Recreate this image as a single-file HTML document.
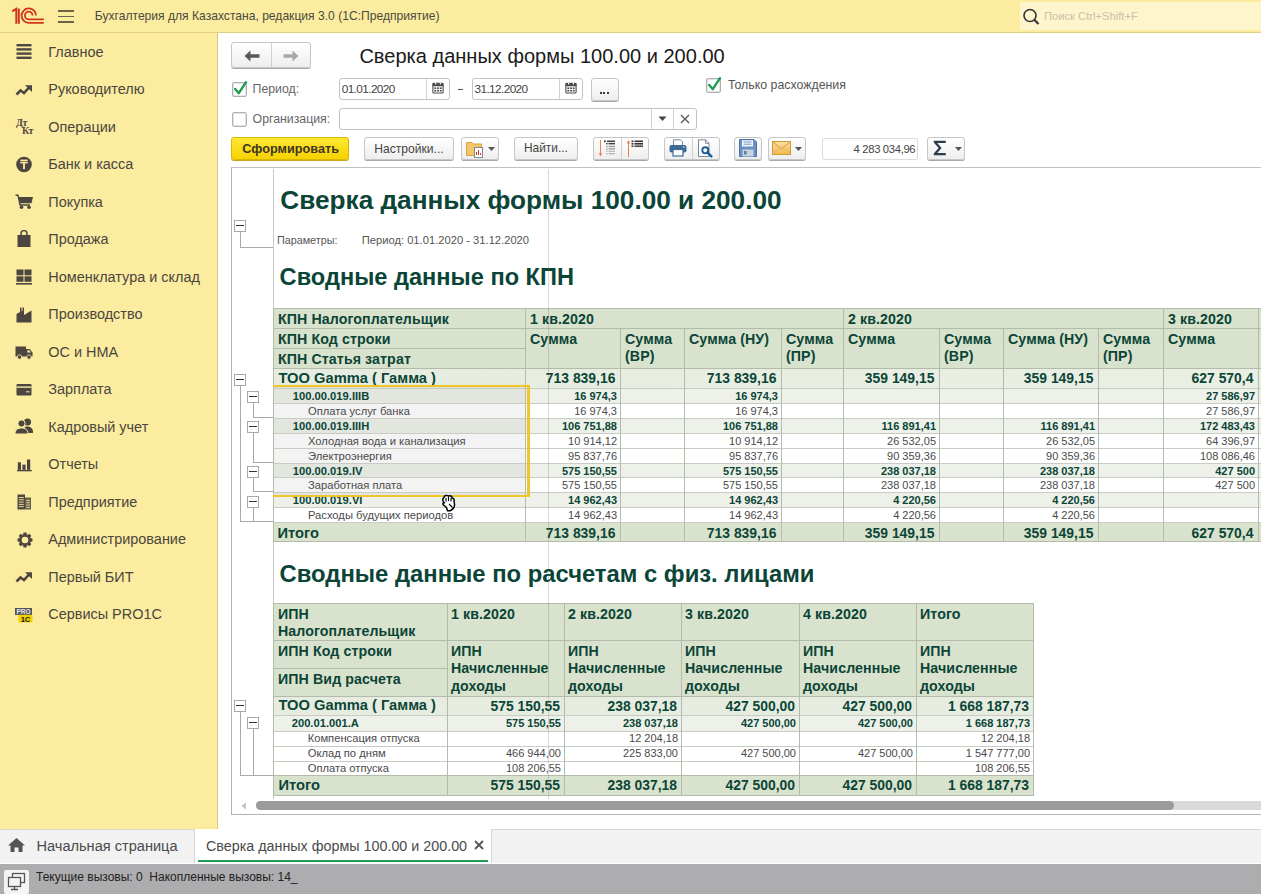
<!DOCTYPE html>
<html><head><meta charset="utf-8"><style>
html,body{margin:0;padding:0;}
body{width:1261px;height:894px;overflow:hidden;position:relative;font-family:"Liberation Sans", sans-serif;background:#fff;}
.b{position:absolute;box-sizing:border-box;}
.t{position:absolute;white-space:pre;}
</style></head><body>
<div class="b" style="left:0px;top:0px;width:1261px;height:894px;background:#fff;"></div><div class="b" style="left:0px;top:0px;width:1261px;height:32px;background:#fbec9f;"></div><div class="b" style="left:0px;top:32px;width:1261px;height:1px;background:#e2cf84;"></div><div class="b" style="left:0px;top:33px;width:217px;height:796px;background:#fbec9f;"></div><div class="b" style="left:217px;top:33px;width:1px;height:796px;background:#d6c880;"></div><svg class="b" style="left:8px;top:2px" width="40" height="26" viewBox="0 0 40 26">
<path d="M4.2 9.4 L8.3 6.9 V21.8" stroke="#cf361c" stroke-width="2" fill="none" stroke-linejoin="miter"/>
<path d="M10.8 6.5 V21.8" stroke="#cf361c" stroke-width="2" fill="none"/>
<path d="M28 13.4 A7.2 7.2 0 1 0 20.6 20.8 H35.8" stroke="#cf361c" stroke-width="1.8" fill="none"/>
<path d="M24.5 13.4 A3.8 3.8 0 1 0 20.6 17.3 H35.8" stroke="#cf361c" stroke-width="1.8" fill="none"/>
</svg><div class="b" style="left:58px;top:10px;width:16px;height:1.5px;background:#6b6548;"></div><div class="b" style="left:58px;top:15.5px;width:16px;height:1.5px;background:#6b6548;"></div><div class="b" style="left:58px;top:21px;width:16px;height:1.5px;background:#6b6548;"></div><div class="t" style="left:94.80px;top:10.36px;font-size:12.1px;line-height:12.1px;color:#4a4a40;">Бухгалтерия для Казахстана, редакция 3.0 (1С:Предприятие)</div><div class="b" style="left:1020px;top:2px;width:241px;height:28px;background:#fdf5cc;"></div><svg class="b" style="left:1022px;top:8px" width="20" height="18" viewBox="0 0 20 18">
<circle cx="8" cy="7.5" r="6" stroke="#333" stroke-width="1.6" fill="none"/>
<path d="M12.3 11.8 L16.5 16" stroke="#333" stroke-width="2.2"/></svg><div class="t" style="left:1044.00px;top:10.82px;font-size:11.2px;line-height:11.2px;color:#c9c2a8;">Поиск Ctrl+Shift+F</div><div class="t" style="left:48.30px;top:44.67px;font-size:14.45px;line-height:14.45px;color:#4a4640;">Главное</div><div class="t" style="left:48.30px;top:82.17px;font-size:14.45px;line-height:14.45px;color:#4a4640;">Руководителю</div><div class="t" style="left:48.30px;top:119.67px;font-size:14.45px;line-height:14.45px;color:#4a4640;">Операции</div><div class="t" style="left:48.30px;top:157.17px;font-size:14.45px;line-height:14.45px;color:#4a4640;">Банк и касса</div><div class="t" style="left:48.30px;top:194.67px;font-size:14.45px;line-height:14.45px;color:#4a4640;">Покупка</div><div class="t" style="left:48.30px;top:232.17px;font-size:14.45px;line-height:14.45px;color:#4a4640;">Продажа</div><div class="t" style="left:48.30px;top:269.67px;font-size:14.45px;line-height:14.45px;color:#4a4640;">Номенклатура и склад</div><div class="t" style="left:48.30px;top:307.17px;font-size:14.45px;line-height:14.45px;color:#4a4640;">Производство</div><div class="t" style="left:48.30px;top:344.67px;font-size:14.45px;line-height:14.45px;color:#4a4640;">ОС и НМА</div><div class="t" style="left:48.30px;top:382.17px;font-size:14.45px;line-height:14.45px;color:#4a4640;">Зарплата</div><div class="t" style="left:48.30px;top:419.67px;font-size:14.45px;line-height:14.45px;color:#4a4640;">Кадровый учет</div><div class="t" style="left:48.30px;top:457.17px;font-size:14.45px;line-height:14.45px;color:#4a4640;">Отчеты</div><div class="t" style="left:48.30px;top:494.67px;font-size:14.45px;line-height:14.45px;color:#4a4640;">Предприятие</div><div class="t" style="left:48.30px;top:532.17px;font-size:14.45px;line-height:14.45px;color:#4a4640;">Администрирование</div><div class="t" style="left:48.30px;top:569.67px;font-size:14.45px;line-height:14.45px;color:#4a4640;">Первый БИТ</div><div class="t" style="left:48.30px;top:607.17px;font-size:14.45px;line-height:14.45px;color:#4a4640;">Сервисы PRO1C</div><svg class="b" style="left:16px;top:44px" width="16" height="16" viewBox="0 0 16 16" fill="#4d4640"><rect x="0.5" y="0" width="15" height="2.4"/><rect x="0.5" y="4.2" width="15" height="2.4"/><rect x="0.5" y="8.4" width="15" height="2.4"/><rect x="0.5" y="12.6" width="15" height="2.4"/></svg><svg class="b" style="left:15px;top:84px" width="18" height="13" viewBox="0 0 18 13" fill="#4d4640"><path d="M1.5 10.5 L5.5 6.5 L9 9 L14 3.5" stroke="#4d4640" stroke-width="2.6" fill="none" stroke-linejoin="miter"/><path d="M10 1.2 H17 V8 Z" /></svg><svg class="b" style="left:16px;top:156px" width="16" height="17" viewBox="0 0 16 17" fill="#4d4640"><circle cx="8" cy="8.5" r="7.8"/><rect x="4.3" y="3.6" width="7.4" height="1.5" fill="#fbec9f"/><rect x="4.3" y="5.8" width="7.4" height="1.6" fill="#fbec9f"/><rect x="7.1" y="5.8" width="1.8" height="7.4" fill="#fbec9f"/></svg><svg class="b" style="left:15px;top:194px" width="18" height="16" viewBox="0 0 18 16" fill="#4d4640"><path d="M0.5 1.2 H3 L5 11 H15" stroke="#4d4640" stroke-width="1.4" fill="none"/><path d="M3.6 3 H18 L16.5 9.2 H4.8 Z"/><circle cx="6.5" cy="13.3" r="1.8"/><circle cx="14" cy="13.3" r="1.8"/></svg><svg class="b" style="left:17px;top:230px" width="14" height="17" viewBox="0 0 14 17" fill="#4d4640"><path d="M0.5 5 H13.5 V17 H0.5 Z"/><path d="M4 6.5 V3.5 A3 3 0 0 1 10 3.5 V6.5" stroke="#4d4640" stroke-width="1.5" fill="none"/></svg><svg class="b" style="left:16px;top:269px" width="16" height="16" viewBox="0 0 16 16" fill="#4d4640"><rect x="0.5" y="0.5" width="7" height="5.8"/><rect x="8.5" y="0.5" width="7" height="5.8"/><rect x="0.5" y="7.3" width="7" height="5.5"/><rect x="8.5" y="7.3" width="7" height="5.5"/><rect x="0" y="14" width="16" height="1.6"/></svg><svg class="b" style="left:16px;top:307px" width="16" height="16" viewBox="0 0 16 16" fill="#4d4640"><path d="M0.5 15.5 V7 L4 5 V0.5 H5.5 V4.3 L6.5 3.8 V0.5 H8 V3 L8 8 L15.5 3.5 V15.5 Z"/><path d="M8 8 L8 4 L0.5 8.5"/></svg><svg class="b" style="left:15px;top:346px" width="18" height="14" viewBox="0 0 18 14" fill="#4d4640"><path d="M0.5 0.5 H11 V10.5 H0.5 Z"/><path d="M11 3 H14.5 L17.5 6.5 V10.5 H11 Z"/><path d="M12.3 4.3 H14 L16 6.6 H12.3 Z" fill="#fbec9f"/><circle cx="4.5" cy="11" r="2.2" stroke="#fbec9f" stroke-width="0.8"/><circle cx="14" cy="11" r="2.2" stroke="#fbec9f" stroke-width="0.8"/></svg><svg class="b" style="left:16px;top:384px" width="16" height="12" viewBox="0 0 16 12" fill="#4d4640"><rect x="0.5" y="0" width="15" height="11.5" rx="1"/><rect x="0.5" y="2.4" width="15" height="1.4" fill="#fbec9f"/><rect x="10" y="7.3" width="3.5" height="1" fill="#fbec9f"/></svg><svg class="b" style="left:15px;top:418px" width="18" height="16" viewBox="0 0 18 16" fill="#4d4640"><circle cx="12.5" cy="4" r="3.6"/><path d="M8 15 C8 10 10 8.5 12.5 8.5 C15 8.5 18 10 18 14 V15 Z"/><circle cx="6.5" cy="5.5" r="3.6" stroke="#fbec9f" stroke-width="1"/><path d="M0 16 C0 11.5 3 10 6.5 10 C10 10 13 11.5 13 16 Z" stroke="#fbec9f" stroke-width="1"/></svg><svg class="b" style="left:17px;top:459px" width="15" height="13" viewBox="0 0 15 13" fill="#4d4640"><rect x="0.8" y="3.3" width="3.2" height="7.6"/><rect x="5.4" y="5.6" width="3.2" height="5.3"/><rect x="10" y="0.5" width="3.2" height="10.4"/><rect x="0" y="11" width="14.8" height="1.3"/></svg><svg class="b" style="left:17px;top:494px" width="15" height="16" viewBox="0 0 15 16" fill="#4d4640"><path d="M0.5 0.5 H8 V15.5 H0.5 Z"/><path d="M8 3.5 H14 V15.5 H8 Z" opacity="0.85"/><g fill="#fbec9f"><rect x="1.8" y="3" width="5" height="0.9"/><rect x="1.8" y="5.3" width="5" height="0.9"/><rect x="1.8" y="7.6" width="5" height="0.9"/><rect x="1.8" y="9.9" width="5" height="0.9"/><rect x="1.8" y="12.2" width="5" height="0.9"/><rect x="9.3" y="6" width="3.5" height="0.9"/><rect x="9.3" y="8.3" width="3.5" height="0.9"/><rect x="9.3" y="10.6" width="3.5" height="0.9"/><rect x="9.3" y="12.9" width="3.5" height="0.9"/></g></svg><svg class="b" style="left:15px;top:571px" width="18" height="13" viewBox="0 0 18 13" fill="#4d4640"><path d="M1.5 10.5 L5.5 6.5 L9 9 L14 3.5" stroke="#4d4640" stroke-width="2.6" fill="none"/><path d="M10 1.2 H17 V8 Z" /></svg><div class="t" style="left:16px;top:117.5px;font:bold 10px/10px 'Liberation Serif',serif;color:#4d4640;letter-spacing:-0.4px">Дт</div><div class="t" style="left:22px;top:125.5px;font:bold 10px/10px 'Liberation Serif',serif;color:#4d4640;letter-spacing:-0.4px">Кт</div><svg class="b" style="left:16.5px;top:532px" width="16" height="16" viewBox="0 0 16 16"><polygon points="15.45,6.49 15.45,9.51 13.24,9.97 13.10,10.31 14.33,12.20 12.20,14.33 10.31,13.10 9.97,13.24 9.51,15.45 6.49,15.45 6.03,13.24 5.69,13.10 3.80,14.33 1.67,12.20 2.90,10.31 2.76,9.97 0.55,9.51 0.55,6.49 2.76,6.03 2.90,5.69 1.67,3.80 3.80,1.67 5.69,2.90 6.03,2.76 6.49,0.55 9.51,0.55 9.97,2.76 10.31,2.90 12.20,1.67 14.33,3.80 13.10,5.69 13.24,6.03" fill="#4d4640"/><circle cx="8" cy="8" r="3.3" fill="#fbec9f"/></svg><svg class="b" style="left:15px;top:608px" width="18" height="15" viewBox="0 0 18 15"><rect x="0" y="0" width="17" height="7" fill="#555"/><rect x="3.5" y="6.8" width="14" height="7.5" fill="#f5d000"/><text x="8.5" y="6" font-family="Liberation Sans" font-weight="bold" font-size="6.5" fill="#e8e8f0" text-anchor="middle">PRO</text><text x="10.5" y="13.5" font-family="Liberation Sans" font-weight="bold" font-size="7.5" fill="#111" text-anchor="middle">1C</text></svg><div class="b" style="left:0px;top:829px;width:1261px;height:34px;background:#f2f2f2;"></div><div class="b" style="left:0px;top:829px;width:1261px;height:1px;background:#d8d8d8;"></div><div class="b" style="left:194px;top:829px;width:298px;height:34px;background:#fff;"></div><div class="b" style="left:194px;top:829px;width:1px;height:34px;background:#d8d8d8;"></div><div class="b" style="left:491px;top:829px;width:1px;height:34px;background:#d8d8d8;"></div><div class="b" style="left:198px;top:860px;width:290px;height:2px;background:#1e9a54;"></div><div class="t" style="left:36.50px;top:838.86px;font-size:14.58px;line-height:14.58px;color:#4a4a4a;">Начальная страница</div><div class="t" style="left:206.00px;top:839.08px;font-size:14.32px;line-height:14.32px;color:#4a4a4a;">Сверка данных формы 100.00 и 200.00</div><svg class="b" style="left:474px;top:840px" width="10" height="10" viewBox="0 0 10 10"><path d="M1 1 L9 9 M9 1 L1 9" stroke="#555" stroke-width="1.8"/></svg><svg class="b" style="left:8px;top:838px" width="17" height="14" viewBox="0 0 17 14"><path d="M8.5 0 L17 7.5 L14.5 7.5 L14.5 14 L10.5 14 L10.5 9.5 L6.5 9.5 L6.5 14 L2.5 14 L2.5 7.5 L0 7.5 Z" fill="#555"/></svg><div class="b" style="left:0px;top:863.6px;width:1261px;height:31px;background:#adacae;"></div><div class="b" style="left:4px;top:870px;width:25px;height:24px;background:#f4f4f4;border-radius:2px;"></div><svg class="b" style="left:6px;top:872px" width="21" height="20" viewBox="0 0 21 20">
<rect x="6.5" y="1.5" width="12" height="9" fill="#f4f4f4" stroke="#555" stroke-width="1.3"/>
<rect x="2.5" y="5.5" width="12" height="9" fill="#f4f4f4" stroke="#555" stroke-width="1.3"/>
<path d="M8.5 14.5 V17 M5 17.5 H12" stroke="#555" stroke-width="1.3"/></svg><div class="t" style="left:36.00px;top:870.84px;font-size:12px;line-height:12px;color:#222;">Текущие вызовы: 0  Накопленные вызовы: 14_</div><div class="b" style="left:231px;top:42px;width:80px;height:26px;background:linear-gradient(#ffffff,#eeeeee);border:1px solid #c6c6c6;border-radius:3px;box-shadow:0 1px 0 #a9a9a9;"></div><div class="b" style="left:271px;top:43px;width:1px;height:24px;background:#d0d0d0;"></div><svg class="b" style="left:243.5px;top:50px" width="18" height="12" viewBox="0 0 18 12"><path d="M0.5 6 L6.5 0.5 L6.5 4.2 L15.5 4.2 L15.5 7.8 L6.5 7.8 L6.5 11.5 Z" fill="#5a5a5a"/></svg><svg class="b" style="left:282px;top:50px" width="18" height="12" viewBox="0 0 18 12"><path d="M16.5 6 L10.5 0.5 L10.5 4.2 L1.5 4.2 L1.5 7.8 L10.5 7.8 L10.5 11.5 Z" fill="#a8a8a8"/></svg><div class="t" style="left:359.40px;top:45.83px;font-size:20.05px;line-height:20.05px;color:#1a1a1a;">Сверка данных формы 100.00 и 200.00</div><div class="b" style="left:232px;top:82px;width:15px;height:15px;background:#fff;border:1px solid #b0b0b0;border-radius:2px;box-shadow:inset 0 0 0 1px #e4e4e4;"></div><svg class="b" style="left:233px;top:80px" width="15" height="16" viewBox="0 0 15 16"><path d="M2.2 9 L5.8 13.2 L13 2.2" stroke="#1d9a50" stroke-width="2.4" fill="none" stroke-linecap="round" stroke-linejoin="round"/></svg><div class="t" style="left:252.60px;top:83.19px;font-size:12.3px;line-height:12.3px;color:#666;">Период:</div><div class="b" style="left:232px;top:112px;width:15px;height:15px;background:#fff;border:1px solid #b0b0b0;border-radius:2px;box-shadow:inset 0 0 0 1px #e4e4e4;"></div><div class="t" style="left:252.60px;top:113.19px;font-size:12.3px;line-height:12.3px;color:#666;">Организация:</div><div class="b" style="left:339px;top:78px;width:111px;height:22px;background:#fff;border:1px solid #c3c3c3;border-radius:3px;"></div><div class="b" style="left:426px;top:79px;width:1px;height:20px;background:#d2d2d2;"></div><svg class="b" style="left:432px;top:82px" width="12" height="12" viewBox="0 0 12 12"><rect x="0.9" y="1.2" width="10.2" height="9.8" rx="1" fill="#fff" stroke="#4a4a4a" stroke-width="1.1"/><rect x="0.6" y="0.9" width="10.8" height="3.4" rx="1" fill="#4a4a4a"/><rect x="3" y="0.6" width="1.2" height="1.8" fill="#fff"/><rect x="7.8" y="0.6" width="1.2" height="1.8" fill="#fff"/><g fill="#4a4a4a"><rect x="2.4" y="5.4" width="1.8" height="1.7"/><rect x="5.1" y="5.4" width="1.8" height="1.7"/><rect x="7.8" y="5.4" width="1.8" height="1.7"/><rect x="2.4" y="8" width="1.8" height="1.5"/><rect x="5.1" y="8" width="1.8" height="1.5"/><rect x="7.8" y="8" width="1.8" height="1.5"/></g></svg><div class="t" style="left:341.70px;top:83.51px;font-size:11.8px;line-height:11.8px;color:#444;letter-spacing:-0.6px;">01.01.2020</div><div class="b" style="left:458.3px;top:88.6px;width:5px;height:1.3px;background:#555;"></div><div class="b" style="left:472px;top:78px;width:111px;height:22px;background:#fff;border:1px solid #c3c3c3;border-radius:3px;"></div><div class="b" style="left:559px;top:79px;width:1px;height:20px;background:#d2d2d2;"></div><svg class="b" style="left:565px;top:82px" width="12" height="12" viewBox="0 0 12 12"><rect x="0.9" y="1.2" width="10.2" height="9.8" rx="1" fill="#fff" stroke="#4a4a4a" stroke-width="1.1"/><rect x="0.6" y="0.9" width="10.8" height="3.4" rx="1" fill="#4a4a4a"/><rect x="3" y="0.6" width="1.2" height="1.8" fill="#fff"/><rect x="7.8" y="0.6" width="1.2" height="1.8" fill="#fff"/><g fill="#4a4a4a"><rect x="2.4" y="5.4" width="1.8" height="1.7"/><rect x="5.1" y="5.4" width="1.8" height="1.7"/><rect x="7.8" y="5.4" width="1.8" height="1.7"/><rect x="2.4" y="8" width="1.8" height="1.5"/><rect x="5.1" y="8" width="1.8" height="1.5"/><rect x="7.8" y="8" width="1.8" height="1.5"/></g></svg><div class="t" style="left:474.50px;top:83.51px;font-size:11.8px;line-height:11.8px;color:#444;letter-spacing:-0.6px;">31.12.2020</div><div class="b" style="left:591px;top:78px;width:28px;height:23px;background:linear-gradient(#ffffff,#eeeeee);border:1px solid #c6c6c6;border-radius:3px;box-shadow:0 1px 0 #a9a9a9;"></div><div class="b" style="left:599.8px;top:92.2px;width:1.9px;height:1.9px;background:#3a3a3a;"></div><div class="b" style="left:603.4px;top:92.2px;width:1.9px;height:1.9px;background:#3a3a3a;"></div><div class="b" style="left:607px;top:92.2px;width:1.9px;height:1.9px;background:#3a3a3a;"></div><div class="b" style="left:706px;top:78px;width:15px;height:15px;background:#fff;border:1px solid #b0b0b0;border-radius:2px;box-shadow:inset 0 0 0 1px #e4e4e4;"></div><svg class="b" style="left:707px;top:76px" width="15" height="16" viewBox="0 0 15 16"><path d="M2.2 9 L5.8 13.2 L13 2.2" stroke="#1d9a50" stroke-width="2.4" fill="none" stroke-linecap="round" stroke-linejoin="round"/></svg><div class="t" style="left:727.90px;top:79.35px;font-size:12.35px;line-height:12.35px;color:#555;">Только расхождения</div><div class="b" style="left:339px;top:108px;width:358px;height:22px;background:#fff;border:1px solid #c3c3c3;border-radius:3px;"></div><div class="b" style="left:651px;top:109px;width:1px;height:20px;background:#d2d2d2;"></div><div class="b" style="left:673px;top:109px;width:1px;height:20px;background:#d2d2d2;"></div><svg class="b" style="left:658px;top:116px" width="9" height="6" viewBox="0 0 9 6"><path d="M0.5 0.5 H8.5 L4.5 5 Z" fill="#444"/></svg><svg class="b" style="left:680px;top:114px" width="10" height="10" viewBox="0 0 10 10"><path d="M1 1 L9 9 M9 1 L1 9" stroke="#555" stroke-width="1.3"/></svg><div class="b" style="left:231px;top:137px;width:118px;height:22.5px;background:linear-gradient(#fee833,#f6d200);border:1px solid #d6b800;border-radius:3px;box-shadow:0 1px 0 #c8a818;"></div><div class="t" style="left:242.30px;top:142.55px;font-size:12.7px;line-height:12.7px;color:#3d3522;font-weight:bold;">Сформировать</div><div class="b" style="left:364px;top:137px;width:90px;height:23px;background:linear-gradient(#ffffff,#eeeeee);border:1px solid #c6c6c6;border-radius:3px;box-shadow:0 1px 0 #a9a9a9;"></div><div class="t" style="left:374.30px;top:143.06px;font-size:12.1px;line-height:12.1px;color:#444;">Настройки...</div><div class="b" style="left:461px;top:137px;width:38px;height:23px;background:linear-gradient(#ffffff,#eeeeee);border:1px solid #c6c6c6;border-radius:3px;box-shadow:0 1px 0 #a9a9a9;"></div><svg class="b" style="left:466px;top:140px" width="20" height="18" viewBox="0 0 20 18"><path d="M0.5 2.5 H6 L7.5 4 H15.5 V15.5 H0.5 Z" fill="#f3c769" stroke="#d9a640" stroke-width="1"/><rect x="8.5" y="7.5" width="8" height="10" fill="#fff" stroke="#888" stroke-width="1"/><path d="M10.5 15 V12 M12.5 15 V10 M14.5 15 V13" stroke="#d04020" stroke-width="1"/></svg><svg class="b" style="left:488px;top:147px" width="7" height="4" viewBox="0 0 7 4"><path d="M0 0 H7 L3.5 4 Z" fill="#555"/></svg><div class="b" style="left:514px;top:137px;width:64px;height:23px;background:linear-gradient(#ffffff,#eeeeee);border:1px solid #c6c6c6;border-radius:3px;box-shadow:0 1px 0 #a9a9a9;"></div><div class="t" style="left:524.00px;top:143.23px;font-size:11.9px;line-height:11.9px;color:#444;">Найти...</div><div class="b" style="left:593px;top:137px;width:56px;height:23px;background:linear-gradient(#ffffff,#eeeeee);border:1px solid #c6c6c6;border-radius:3px;box-shadow:0 1px 0 #a9a9a9;"></div><div class="b" style="left:621px;top:138px;width:1px;height:21px;background:#d0d0d0;"></div><svg class="b" style="left:598px;top:139px" width="19" height="19" viewBox="0 0 19 19"><path d="M2.5 1 V16.5" stroke="#e8804a" stroke-width="1"/><path d="M0.8 14 L2.5 17.5 L4.2 14 Z" fill="#e8804a"/><g fill="#444"><rect x="6" y="1.5" width="2" height="1.6"/><rect x="9" y="1.5" width="8" height="1.6"/><rect x="8" y="4" width="1.6" height="1.4"/><rect x="10.5" y="4" width="6.5" height="1.4"/></g><g fill="#9a9a9a"><rect x="8" y="6.8" width="1.6" height="1.3"/><rect x="10.5" y="6.8" width="6.5" height="1.3"/><rect x="8" y="9.2" width="1.6" height="1.3"/><rect x="10.5" y="9.2" width="6.5" height="1.3"/></g><g fill="#b8b8b8"><rect x="8" y="11.6" width="1.6" height="1.3"/><rect x="10.5" y="11.6" width="6.5" height="1.3"/><rect x="8" y="14" width="1.6" height="1.3"/><rect x="10.5" y="14" width="6.5" height="1.3"/></g></svg><svg class="b" style="left:626px;top:139px" width="19" height="19" viewBox="0 0 19 19"><path d="M2.5 3 V18" stroke="#e8804a" stroke-width="1"/><path d="M0.8 4.5 L2.5 1 L4.2 4.5 Z" fill="#e8804a"/><g fill="#333"><rect x="5.5" y="1.5" width="2" height="1.6"/><rect x="8.5" y="1.5" width="8.5" height="1.6"/><rect x="5.5" y="4" width="2" height="1.6"/><rect x="8.5" y="4" width="8.5" height="1.6"/><rect x="5.5" y="6.5" width="2" height="1.4"/><rect x="8.5" y="6.5" width="8.5" height="1.4"/></g></svg><div class="b" style="left:664px;top:137px;width:56px;height:23px;background:linear-gradient(#ffffff,#eeeeee);border:1px solid #c6c6c6;border-radius:3px;box-shadow:0 1px 0 #a9a9a9;"></div><div class="b" style="left:692px;top:138px;width:1px;height:21px;background:#d0d0d0;"></div><svg class="b" style="left:669px;top:139px" width="18" height="18" viewBox="0 0 18 18"><path d="M4.5 0.8 H11.5 L13.5 2.8 V7 H4.5 Z" fill="#fff" stroke="#7a8a9a" stroke-width="1"/><rect x="0.5" y="6" width="17" height="7.5" rx="2" fill="#3d6b97"/><rect x="14" y="7.5" width="1.6" height="1.2" fill="#cfe0f0"/><rect x="4" y="10.5" width="10" height="6.5" fill="#fff" stroke="#3d6b97" stroke-width="1.2"/></svg><svg class="b" style="left:697px;top:139px" width="18" height="19" viewBox="0 0 18 19"><path d="M1.5 0.8 H8.5 L12 4.3 V17.5 H1.5 Z" fill="#fff" stroke="#7a8899" stroke-width="1"/><path d="M8.5 0.8 V4.3 H12" fill="none" stroke="#7a8899" stroke-width="1"/><circle cx="8.3" cy="11.2" r="3" fill="#fff" stroke="#1f5d96" stroke-width="1.9"/><path d="M10.4 13.4 L14.3 17.3" stroke="#1f5d96" stroke-width="2.5" stroke-linecap="round"/></svg><div class="b" style="left:734px;top:137px;width:28px;height:23px;background:linear-gradient(#ffffff,#eeeeee);border:1px solid #c6c6c6;border-radius:3px;box-shadow:0 1px 0 #a9a9a9;"></div><svg class="b" style="left:739px;top:139px" width="18" height="19" viewBox="0 0 18 19"><path d="M0.5 0.5 H15 L17.5 3 V17.5 H0.5 Z" fill="#6a90c4" stroke="#4a72a8" stroke-width="1"/><rect x="3" y="1.2" width="11" height="6.3" fill="#f2f5fa"/><path d="M4.5 3 H12.5 M4.5 5.2 H12.5" stroke="#7a9ccc" stroke-width="1"/><rect x="3.5" y="10.5" width="11" height="7" fill="#c9d3dc"/><rect x="5" y="12" width="2.5" height="3.5" fill="#5a7aa8"/></svg><div class="b" style="left:768px;top:137px;width:38px;height:23px;background:linear-gradient(#ffffff,#eeeeee);border:1px solid #c6c6c6;border-radius:3px;box-shadow:0 1px 0 #a9a9a9;"></div><svg class="b" style="left:772px;top:141px" width="19" height="14" viewBox="0 0 19 14"><defs><linearGradient id="mg" x1="0" y1="0" x2="0" y2="1"><stop offset="0" stop-color="#fbe0a0"/><stop offset="1" stop-color="#f0b850"/></linearGradient></defs><rect x="0.5" y="0.5" width="18" height="13" fill="url(#mg)" stroke="#d49a3a" stroke-width="1"/><path d="M0.8 0.8 L9.5 8 L18.2 0.8" stroke="#d49a3a" stroke-width="1" fill="none"/><path d="M0.8 13.2 L7 7 M18.2 13.2 L12 7" stroke="#e3b060" stroke-width="0.8" fill="none"/></svg><svg class="b" style="left:795px;top:147px" width="7" height="4" viewBox="0 0 7 4"><path d="M0 0 H7 L3.5 4 Z" fill="#555"/></svg><div class="b" style="left:822px;top:138px;width:96px;height:22px;background:#fff;border:1px solid #dcdcdc;border-radius:2px;"></div><div class="t" style="left:515.30px;width:400px;text-align:right;top:144.12px;font-size:11.2px;line-height:11.2px;color:#444;letter-spacing:-0.3px;">4 283 034,96</div><div class="b" style="left:927px;top:137px;width:38px;height:23px;background:linear-gradient(#ffffff,#eeeeee);border:1px solid #c6c6c6;border-radius:3px;box-shadow:0 1px 0 #a9a9a9;"></div><svg class="b" style="left:933px;top:140px" width="14" height="16" viewBox="0 0 14 16"><path d="M0.8 0.8 H12.8 V3 H4.2 L8.6 8 L4.2 13 H12.8 V15.2 H0.8 V13.6 L5.6 8 L0.8 2.4 Z" fill="#2e3d4c"/></svg><svg class="b" style="left:955px;top:147px" width="7" height="4" viewBox="0 0 7 4"><path d="M0 0 H7 L3.5 4 Z" fill="#555"/></svg><div class="b" style="left:231px;top:167px;width:1040px;height:648px;border:1px solid #b3b3b3;border-top:1.5px solid #c0c0c0;"></div><div class="b" style="left:273px;top:169px;width:1px;height:630px;background:#c9c9c9;"></div><div class="t" style="left:280.30px;top:186.82px;font-size:26.2px;line-height:26.2px;color:#0b4537;font-weight:bold;">Сверка данных формы 100.00 и 200.00</div><div class="t" style="left:276.90px;top:234.96px;font-size:10.8px;line-height:10.8px;color:#555;">Параметры:</div><div class="t" style="left:361.70px;top:234.62px;font-size:11.2px;line-height:11.2px;color:#555;">Период: 01.01.2020 - 31.12.2020</div><div class="t" style="left:279.60px;top:266.12px;font-size:23.6px;line-height:23.6px;color:#0b4537;font-weight:bold;letter-spacing:0px;">Сводные данные по КПН</div><div class="b" style="left:234px;top:220px;width:12px;height:12px;background:#fff;border:1px solid #a9a9a9;"></div><div class="b" style="left:236px;top:225px;width:8px;height:1.4px;background:#333;"></div><div class="b" style="left:240px;top:232px;width:1px;height:16px;background:#a9a9a9;"></div><div class="b" style="left:240px;top:247px;width:33px;height:1px;background:#a9a9a9;"></div><div class="b" style="left:273px;top:308px;width:1000px;height:60px;background:#d9e2cc;"></div><div class="b" style="left:273px;top:368px;width:1000px;height:20px;background:linear-gradient(90deg,#e6ede0,#e9efe3);"></div><div class="b" style="left:273px;top:388px;width:1000px;height:15px;background:#edf1ea;"></div><div class="b" style="left:273px;top:403px;width:1000px;height:15px;background:#fff;"></div><div class="b" style="left:273px;top:418px;width:1000px;height:15px;background:#edf1ea;"></div><div class="b" style="left:273px;top:433px;width:1000px;height:15px;background:#fff;"></div><div class="b" style="left:273px;top:448px;width:1000px;height:15px;background:#fff;"></div><div class="b" style="left:273px;top:463px;width:1000px;height:14px;background:#edf1ea;"></div><div class="b" style="left:273px;top:477px;width:1000px;height:15px;background:#fff;"></div><div class="b" style="left:273px;top:492px;width:1000px;height:15px;background:#edf1ea;"></div><div class="b" style="left:273px;top:507px;width:1000px;height:15px;background:#fff;"></div><div class="b" style="left:274px;top:387px;width:252px;height:108px;background:rgba(120,120,120,0.085);"></div><div class="b" style="left:273px;top:522px;width:1000px;height:20px;background:#d9e2cc;"></div><div class="b" style="left:273px;top:308px;width:988px;height:1px;background:#b3bcab;"></div><div class="b" style="left:273px;top:328px;width:988px;height:1px;background:#b3bcab;"></div><div class="b" style="left:273px;top:348px;width:252px;height:1px;background:#b3bcab;"></div><div class="b" style="left:273px;top:368px;width:988px;height:1px;background:#b3bcab;"></div><div class="b" style="left:273px;top:388px;width:988px;height:1px;background:#c8cdc4;"></div><div class="b" style="left:273px;top:403px;width:988px;height:1px;background:#c8cdc4;"></div><div class="b" style="left:273px;top:418px;width:988px;height:1px;background:#c8cdc4;"></div><div class="b" style="left:273px;top:433px;width:988px;height:1px;background:#c8cdc4;"></div><div class="b" style="left:273px;top:448px;width:988px;height:1px;background:#c8cdc4;"></div><div class="b" style="left:273px;top:463px;width:988px;height:1px;background:#c8cdc4;"></div><div class="b" style="left:273px;top:477px;width:988px;height:1px;background:#c8cdc4;"></div><div class="b" style="left:273px;top:492px;width:988px;height:1px;background:#c8cdc4;"></div><div class="b" style="left:273px;top:507px;width:988px;height:1px;background:#c8cdc4;"></div><div class="b" style="left:273px;top:522px;width:988px;height:1px;background:#c8cdc4;"></div><div class="b" style="left:273px;top:541px;width:988px;height:1px;background:#b3bcab;"></div><div class="b" style="left:273px;top:308px;width:1px;height:233px;background:#b3bcab;"></div><div class="b" style="left:525px;top:308px;width:1px;height:233px;background:#b3bcab;"></div><div class="b" style="left:620px;top:328px;width:1px;height:213px;background:#b3bcab;"></div><div class="b" style="left:684px;top:328px;width:1px;height:213px;background:#b3bcab;"></div><div class="b" style="left:781px;top:328px;width:1px;height:213px;background:#b3bcab;"></div><div class="b" style="left:843px;top:308px;width:1px;height:233px;background:#b3bcab;"></div><div class="b" style="left:939px;top:328px;width:1px;height:213px;background:#b3bcab;"></div><div class="b" style="left:1003px;top:328px;width:1px;height:213px;background:#b3bcab;"></div><div class="b" style="left:1098px;top:328px;width:1px;height:213px;background:#b3bcab;"></div><div class="b" style="left:1163px;top:308px;width:1px;height:233px;background:#b3bcab;"></div><div class="b" style="left:1258px;top:308px;width:1px;height:233px;background:#b3bcab;"></div><div class="t" style="left:278.00px;top:312.08px;font-size:14.2px;line-height:14.2px;color:#0b4537;font-weight:bold;letter-spacing:0.1px;">КПН Налогоплательщик</div><div class="t" style="left:278.00px;top:332.08px;font-size:14.2px;line-height:14.2px;color:#0b4537;font-weight:bold;letter-spacing:0.1px;">КПН Код строки</div><div class="t" style="left:278.00px;top:352.08px;font-size:14.2px;line-height:14.2px;color:#0b4537;font-weight:bold;letter-spacing:0.1px;">КПН Статья затрат</div><div class="t" style="left:530.00px;top:312.08px;font-size:14.2px;line-height:14.2px;color:#0b4537;font-weight:bold;letter-spacing:0.1px;">1 кв.2020</div><div class="t" style="left:848.00px;top:312.08px;font-size:14.2px;line-height:14.2px;color:#0b4537;font-weight:bold;letter-spacing:0.1px;">2 кв.2020</div><div class="t" style="left:1168.00px;top:312.08px;font-size:14.2px;line-height:14.2px;color:#0b4537;font-weight:bold;letter-spacing:0.1px;">3 кв.2020</div><div class="t" style="left:530.00px;top:332.08px;font-size:14.2px;line-height:14.2px;color:#0b4537;font-weight:bold;letter-spacing:0.1px;">Сумма</div><div class="t" style="left:625.00px;top:332.08px;font-size:14.2px;line-height:14.2px;color:#0b4537;font-weight:bold;letter-spacing:0.1px;">Сумма</div><div class="t" style="left:625.00px;top:349.08px;font-size:14.2px;line-height:14.2px;color:#0b4537;font-weight:bold;letter-spacing:0.1px;">(ВР)</div><div class="t" style="left:689.00px;top:332.08px;font-size:14.2px;line-height:14.2px;color:#0b4537;font-weight:bold;letter-spacing:0.1px;">Сумма (НУ)</div><div class="t" style="left:786.00px;top:332.08px;font-size:14.2px;line-height:14.2px;color:#0b4537;font-weight:bold;letter-spacing:0.1px;">Сумма</div><div class="t" style="left:786.00px;top:349.08px;font-size:14.2px;line-height:14.2px;color:#0b4537;font-weight:bold;letter-spacing:0.1px;">(ПР)</div><div class="t" style="left:848.00px;top:332.08px;font-size:14.2px;line-height:14.2px;color:#0b4537;font-weight:bold;letter-spacing:0.1px;">Сумма</div><div class="t" style="left:944.00px;top:332.08px;font-size:14.2px;line-height:14.2px;color:#0b4537;font-weight:bold;letter-spacing:0.1px;">Сумма</div><div class="t" style="left:944.00px;top:349.08px;font-size:14.2px;line-height:14.2px;color:#0b4537;font-weight:bold;letter-spacing:0.1px;">(ВР)</div><div class="t" style="left:1008.00px;top:332.08px;font-size:14.2px;line-height:14.2px;color:#0b4537;font-weight:bold;letter-spacing:0.1px;">Сумма (НУ)</div><div class="t" style="left:1103.00px;top:332.08px;font-size:14.2px;line-height:14.2px;color:#0b4537;font-weight:bold;letter-spacing:0.1px;">Сумма</div><div class="t" style="left:1103.00px;top:349.08px;font-size:14.2px;line-height:14.2px;color:#0b4537;font-weight:bold;letter-spacing:0.1px;">(ПР)</div><div class="t" style="left:1168.00px;top:332.08px;font-size:14.2px;line-height:14.2px;color:#0b4537;font-weight:bold;letter-spacing:0.1px;">Сумма</div><div class="t" style="left:1263.00px;top:332.08px;font-size:14.2px;line-height:14.2px;color:#0b4537;font-weight:bold;letter-spacing:0.1px;">Сумма</div><div class="t" style="left:1263.00px;top:349.08px;font-size:14.2px;line-height:14.2px;color:#0b4537;font-weight:bold;letter-spacing:0.1px;">(ВР)</div><div class="t" style="left:278.50px;top:371.36px;font-size:14.7px;line-height:14.7px;color:#0b4537;font-weight:bold;">ТОО Gamma ( Гамма )</div><div class="t" style="left:215.40px;width:400px;text-align:right;top:372.03px;font-size:13.9px;line-height:13.9px;color:#0b4537;font-weight:bold;">713 839,16</div><div class="t" style="left:376.40px;width:400px;text-align:right;top:372.03px;font-size:13.9px;line-height:13.9px;color:#0b4537;font-weight:bold;">713 839,16</div><div class="t" style="left:534.40px;width:400px;text-align:right;top:372.03px;font-size:13.9px;line-height:13.9px;color:#0b4537;font-weight:bold;">359 149,15</div><div class="t" style="left:693.40px;width:400px;text-align:right;top:372.03px;font-size:13.9px;line-height:13.9px;color:#0b4537;font-weight:bold;">359 149,15</div><div class="t" style="left:853.40px;width:400px;text-align:right;top:372.03px;font-size:13.9px;line-height:13.9px;color:#0b4537;font-weight:bold;">627 570,4</div><div class="t" style="left:277.50px;top:525.76px;font-size:14.7px;line-height:14.7px;color:#0b4537;font-weight:bold;">Итого</div><div class="t" style="left:215.40px;width:400px;text-align:right;top:526.53px;font-size:13.9px;line-height:13.9px;color:#0b4537;font-weight:bold;">713 839,16</div><div class="t" style="left:376.40px;width:400px;text-align:right;top:526.53px;font-size:13.9px;line-height:13.9px;color:#0b4537;font-weight:bold;">713 839,16</div><div class="t" style="left:534.40px;width:400px;text-align:right;top:526.53px;font-size:13.9px;line-height:13.9px;color:#0b4537;font-weight:bold;">359 149,15</div><div class="t" style="left:693.40px;width:400px;text-align:right;top:526.53px;font-size:13.9px;line-height:13.9px;color:#0b4537;font-weight:bold;">359 149,15</div><div class="t" style="left:853.40px;width:400px;text-align:right;top:526.53px;font-size:13.9px;line-height:13.9px;color:#0b4537;font-weight:bold;">627 570,4</div><div class="t" style="left:292.80px;top:390.72px;font-size:11.2px;line-height:11.2px;color:#0b4537;font-weight:bold;">100.00.019.IIIВ</div><div class="t" style="left:217.00px;width:400px;text-align:right;top:390.89px;font-size:11px;line-height:11px;color:#0b4537;font-weight:bold;">16 974,3</div><div class="t" style="left:378.00px;width:400px;text-align:right;top:390.89px;font-size:11px;line-height:11px;color:#0b4537;font-weight:bold;">16 974,3</div><div class="t" style="left:855.00px;width:400px;text-align:right;top:390.89px;font-size:11px;line-height:11px;color:#0b4537;font-weight:bold;">27 586,97</div><div class="t" style="left:308.00px;top:405.72px;font-size:11.2px;line-height:11.2px;color:#4a4a4a;">Оплата услуг банка</div><div class="t" style="left:217.00px;width:400px;text-align:right;top:405.89px;font-size:11px;line-height:11px;color:#4a4a4a;">16 974,3</div><div class="t" style="left:378.00px;width:400px;text-align:right;top:405.89px;font-size:11px;line-height:11px;color:#4a4a4a;">16 974,3</div><div class="t" style="left:855.00px;width:400px;text-align:right;top:405.89px;font-size:11px;line-height:11px;color:#4a4a4a;">27 586,97</div><div class="t" style="left:292.80px;top:420.72px;font-size:11.2px;line-height:11.2px;color:#0b4537;font-weight:bold;">100.00.019.IIIН</div><div class="t" style="left:217.00px;width:400px;text-align:right;top:420.89px;font-size:11px;line-height:11px;color:#0b4537;font-weight:bold;">106 751,88</div><div class="t" style="left:378.00px;width:400px;text-align:right;top:420.89px;font-size:11px;line-height:11px;color:#0b4537;font-weight:bold;">106 751,88</div><div class="t" style="left:536.00px;width:400px;text-align:right;top:420.89px;font-size:11px;line-height:11px;color:#0b4537;font-weight:bold;">116 891,41</div><div class="t" style="left:695.00px;width:400px;text-align:right;top:420.89px;font-size:11px;line-height:11px;color:#0b4537;font-weight:bold;">116 891,41</div><div class="t" style="left:855.00px;width:400px;text-align:right;top:420.89px;font-size:11px;line-height:11px;color:#0b4537;font-weight:bold;">172 483,43</div><div class="t" style="left:308.00px;top:435.72px;font-size:11.2px;line-height:11.2px;color:#4a4a4a;">Холодная вода и канализация</div><div class="t" style="left:217.00px;width:400px;text-align:right;top:435.89px;font-size:11px;line-height:11px;color:#4a4a4a;">10 914,12</div><div class="t" style="left:378.00px;width:400px;text-align:right;top:435.89px;font-size:11px;line-height:11px;color:#4a4a4a;">10 914,12</div><div class="t" style="left:536.00px;width:400px;text-align:right;top:435.89px;font-size:11px;line-height:11px;color:#4a4a4a;">26 532,05</div><div class="t" style="left:695.00px;width:400px;text-align:right;top:435.89px;font-size:11px;line-height:11px;color:#4a4a4a;">26 532,05</div><div class="t" style="left:855.00px;width:400px;text-align:right;top:435.89px;font-size:11px;line-height:11px;color:#4a4a4a;">64 396,97</div><div class="t" style="left:308.00px;top:450.72px;font-size:11.2px;line-height:11.2px;color:#4a4a4a;">Электроэнергия</div><div class="t" style="left:217.00px;width:400px;text-align:right;top:450.89px;font-size:11px;line-height:11px;color:#4a4a4a;">95 837,76</div><div class="t" style="left:378.00px;width:400px;text-align:right;top:450.89px;font-size:11px;line-height:11px;color:#4a4a4a;">95 837,76</div><div class="t" style="left:536.00px;width:400px;text-align:right;top:450.89px;font-size:11px;line-height:11px;color:#4a4a4a;">90 359,36</div><div class="t" style="left:695.00px;width:400px;text-align:right;top:450.89px;font-size:11px;line-height:11px;color:#4a4a4a;">90 359,36</div><div class="t" style="left:855.00px;width:400px;text-align:right;top:450.89px;font-size:11px;line-height:11px;color:#4a4a4a;">108 086,46</div><div class="t" style="left:292.80px;top:465.72px;font-size:11.2px;line-height:11.2px;color:#0b4537;font-weight:bold;">100.00.019.IV</div><div class="t" style="left:217.00px;width:400px;text-align:right;top:465.89px;font-size:11px;line-height:11px;color:#0b4537;font-weight:bold;">575 150,55</div><div class="t" style="left:378.00px;width:400px;text-align:right;top:465.89px;font-size:11px;line-height:11px;color:#0b4537;font-weight:bold;">575 150,55</div><div class="t" style="left:536.00px;width:400px;text-align:right;top:465.89px;font-size:11px;line-height:11px;color:#0b4537;font-weight:bold;">238 037,18</div><div class="t" style="left:695.00px;width:400px;text-align:right;top:465.89px;font-size:11px;line-height:11px;color:#0b4537;font-weight:bold;">238 037,18</div><div class="t" style="left:855.00px;width:400px;text-align:right;top:465.89px;font-size:11px;line-height:11px;color:#0b4537;font-weight:bold;">427 500</div><div class="t" style="left:308.00px;top:479.72px;font-size:11.2px;line-height:11.2px;color:#4a4a4a;">Заработная плата</div><div class="t" style="left:217.00px;width:400px;text-align:right;top:479.89px;font-size:11px;line-height:11px;color:#4a4a4a;">575 150,55</div><div class="t" style="left:378.00px;width:400px;text-align:right;top:479.89px;font-size:11px;line-height:11px;color:#4a4a4a;">575 150,55</div><div class="t" style="left:536.00px;width:400px;text-align:right;top:479.89px;font-size:11px;line-height:11px;color:#4a4a4a;">238 037,18</div><div class="t" style="left:695.00px;width:400px;text-align:right;top:479.89px;font-size:11px;line-height:11px;color:#4a4a4a;">238 037,18</div><div class="t" style="left:855.00px;width:400px;text-align:right;top:479.89px;font-size:11px;line-height:11px;color:#4a4a4a;">427 500</div><div class="t" style="left:292.80px;top:494.72px;font-size:11.2px;line-height:11.2px;color:#0b4537;font-weight:bold;">100.00.019.VI</div><div class="t" style="left:217.00px;width:400px;text-align:right;top:494.89px;font-size:11px;line-height:11px;color:#0b4537;font-weight:bold;">14 962,43</div><div class="t" style="left:378.00px;width:400px;text-align:right;top:494.89px;font-size:11px;line-height:11px;color:#0b4537;font-weight:bold;">14 962,43</div><div class="t" style="left:536.00px;width:400px;text-align:right;top:494.89px;font-size:11px;line-height:11px;color:#0b4537;font-weight:bold;">4 220,56</div><div class="t" style="left:695.00px;width:400px;text-align:right;top:494.89px;font-size:11px;line-height:11px;color:#0b4537;font-weight:bold;">4 220,56</div><div class="t" style="left:308.00px;top:509.72px;font-size:11.2px;line-height:11.2px;color:#4a4a4a;">Расходы будущих периодов</div><div class="t" style="left:217.00px;width:400px;text-align:right;top:509.89px;font-size:11px;line-height:11px;color:#4a4a4a;">14 962,43</div><div class="t" style="left:378.00px;width:400px;text-align:right;top:509.89px;font-size:11px;line-height:11px;color:#4a4a4a;">14 962,43</div><div class="t" style="left:536.00px;width:400px;text-align:right;top:509.89px;font-size:11px;line-height:11px;color:#4a4a4a;">4 220,56</div><div class="t" style="left:695.00px;width:400px;text-align:right;top:509.89px;font-size:11px;line-height:11px;color:#4a4a4a;">4 220,56</div><div class="b" style="left:273px;top:384.5px;width:257px;height:112.5px;border:2.5px solid #f2c62a;border-right-width:3px;border-left:none;"></div><div class="b" style="left:234px;top:374px;width:12px;height:12px;background:#fff;border:1px solid #a9a9a9;"></div><div class="b" style="left:236px;top:379px;width:8px;height:1.4px;background:#333;"></div><div class="b" style="left:240px;top:386px;width:1px;height:136px;background:#a9a9a9;"></div><div class="b" style="left:240px;top:521px;width:33px;height:1px;background:#a9a9a9;"></div><div class="b" style="left:247px;top:391px;width:12px;height:12px;background:#fff;border:1px solid #a9a9a9;"></div><div class="b" style="left:249px;top:396px;width:8px;height:1.4px;background:#333;"></div><div class="b" style="left:253px;top:403px;width:1px;height:15px;background:#a9a9a9;"></div><div class="b" style="left:253px;top:417px;width:20px;height:1px;background:#a9a9a9;"></div><div class="b" style="left:247px;top:421px;width:12px;height:12px;background:#fff;border:1px solid #a9a9a9;"></div><div class="b" style="left:249px;top:426px;width:8px;height:1.4px;background:#333;"></div><div class="b" style="left:253px;top:433px;width:1px;height:30px;background:#a9a9a9;"></div><div class="b" style="left:253px;top:462px;width:20px;height:1px;background:#a9a9a9;"></div><div class="b" style="left:247px;top:466px;width:12px;height:12px;background:#fff;border:1px solid #a9a9a9;"></div><div class="b" style="left:249px;top:471px;width:8px;height:1.4px;background:#333;"></div><div class="b" style="left:253px;top:478px;width:1px;height:14px;background:#a9a9a9;"></div><div class="b" style="left:253px;top:491px;width:20px;height:1px;background:#a9a9a9;"></div><div class="b" style="left:247px;top:496px;width:12px;height:12px;background:#fff;border:1px solid #a9a9a9;"></div><div class="b" style="left:249px;top:501px;width:8px;height:1.4px;background:#333;"></div><div class="b" style="left:253px;top:508px;width:1px;height:14px;background:#a9a9a9;"></div><div class="b" style="left:253px;top:521px;width:20px;height:1px;background:#a9a9a9;"></div><div class="t" style="left:279.60px;top:562.15px;font-size:23.8px;line-height:23.8px;color:#0b4537;font-weight:bold;">Сводные данные по расчетам с физ. лицами</div><div class="b" style="left:273px;top:603px;width:760px;height:93px;background:#d9e2cc;"></div><div class="b" style="left:273px;top:696px;width:760px;height:19px;background:#e6ede0;"></div><div class="b" style="left:273px;top:715px;width:760px;height:16px;background:#edf1ea;"></div><div class="b" style="left:273px;top:775px;width:760px;height:20px;background:#d9e2cc;"></div><div class="b" style="left:273px;top:603px;width:761px;height:1px;background:#b3bcab;"></div><div class="b" style="left:273px;top:640px;width:761px;height:1px;background:#b3bcab;"></div><div class="b" style="left:273px;top:696px;width:761px;height:1px;background:#b3bcab;"></div><div class="b" style="left:273px;top:715px;width:761px;height:1px;background:#c8cdc4;"></div><div class="b" style="left:273px;top:731px;width:761px;height:1px;background:#c8cdc4;"></div><div class="b" style="left:273px;top:746px;width:761px;height:1px;background:#c8cdc4;"></div><div class="b" style="left:273px;top:761px;width:761px;height:1px;background:#c8cdc4;"></div><div class="b" style="left:273px;top:775px;width:761px;height:1px;background:#b3bcab;"></div><div class="b" style="left:273px;top:795px;width:761px;height:1px;background:#b3bcab;"></div><div class="b" style="left:273px;top:668px;width:174px;height:1px;background:#b3bcab;"></div><div class="b" style="left:273px;top:603px;width:1px;height:192px;background:#b3bcab;"></div><div class="b" style="left:447px;top:603px;width:1px;height:192px;background:#b3bcab;"></div><div class="b" style="left:564px;top:603px;width:1px;height:192px;background:#b3bcab;"></div><div class="b" style="left:681px;top:603px;width:1px;height:192px;background:#b3bcab;"></div><div class="b" style="left:799px;top:603px;width:1px;height:192px;background:#b3bcab;"></div><div class="b" style="left:916px;top:603px;width:1px;height:192px;background:#b3bcab;"></div><div class="b" style="left:1033px;top:603px;width:1px;height:192px;background:#b3bcab;"></div><div class="t" style="left:278.00px;top:607.48px;font-size:14.2px;line-height:14.2px;color:#0b4537;font-weight:bold;letter-spacing:0.1px;">ИПН</div><div class="t" style="left:278.00px;top:624.48px;font-size:14.2px;line-height:14.2px;color:#0b4537;font-weight:bold;letter-spacing:0.1px;">Налогоплательщик</div><div class="t" style="left:278.00px;top:644.48px;font-size:14.2px;line-height:14.2px;color:#0b4537;font-weight:bold;letter-spacing:0.1px;">ИПН Код строки</div><div class="t" style="left:278.00px;top:672.48px;font-size:14.2px;line-height:14.2px;color:#0b4537;font-weight:bold;letter-spacing:0.1px;">ИПН Вид расчета</div><div class="t" style="left:451.00px;top:607.48px;font-size:14.2px;line-height:14.2px;color:#0b4537;font-weight:bold;letter-spacing:0.1px;">1 кв.2020</div><div class="t" style="left:451.00px;top:644.48px;font-size:14.2px;line-height:14.2px;color:#0b4537;font-weight:bold;letter-spacing:0.1px;">ИПН</div><div class="t" style="left:451.00px;top:661.48px;font-size:14.2px;line-height:14.2px;color:#0b4537;font-weight:bold;letter-spacing:0.1px;">Начисленные</div><div class="t" style="left:451.00px;top:678.98px;font-size:14.2px;line-height:14.2px;color:#0b4537;font-weight:bold;letter-spacing:0.1px;">доходы</div><div class="t" style="left:568.00px;top:607.48px;font-size:14.2px;line-height:14.2px;color:#0b4537;font-weight:bold;letter-spacing:0.1px;">2 кв.2020</div><div class="t" style="left:568.00px;top:644.48px;font-size:14.2px;line-height:14.2px;color:#0b4537;font-weight:bold;letter-spacing:0.1px;">ИПН</div><div class="t" style="left:568.00px;top:661.48px;font-size:14.2px;line-height:14.2px;color:#0b4537;font-weight:bold;letter-spacing:0.1px;">Начисленные</div><div class="t" style="left:568.00px;top:678.98px;font-size:14.2px;line-height:14.2px;color:#0b4537;font-weight:bold;letter-spacing:0.1px;">доходы</div><div class="t" style="left:685.00px;top:607.48px;font-size:14.2px;line-height:14.2px;color:#0b4537;font-weight:bold;letter-spacing:0.1px;">3 кв.2020</div><div class="t" style="left:685.00px;top:644.48px;font-size:14.2px;line-height:14.2px;color:#0b4537;font-weight:bold;letter-spacing:0.1px;">ИПН</div><div class="t" style="left:685.00px;top:661.48px;font-size:14.2px;line-height:14.2px;color:#0b4537;font-weight:bold;letter-spacing:0.1px;">Начисленные</div><div class="t" style="left:685.00px;top:678.98px;font-size:14.2px;line-height:14.2px;color:#0b4537;font-weight:bold;letter-spacing:0.1px;">доходы</div><div class="t" style="left:803.00px;top:607.48px;font-size:14.2px;line-height:14.2px;color:#0b4537;font-weight:bold;letter-spacing:0.1px;">4 кв.2020</div><div class="t" style="left:803.00px;top:644.48px;font-size:14.2px;line-height:14.2px;color:#0b4537;font-weight:bold;letter-spacing:0.1px;">ИПН</div><div class="t" style="left:803.00px;top:661.48px;font-size:14.2px;line-height:14.2px;color:#0b4537;font-weight:bold;letter-spacing:0.1px;">Начисленные</div><div class="t" style="left:803.00px;top:678.98px;font-size:14.2px;line-height:14.2px;color:#0b4537;font-weight:bold;letter-spacing:0.1px;">доходы</div><div class="t" style="left:920.00px;top:607.48px;font-size:14.2px;line-height:14.2px;color:#0b4537;font-weight:bold;letter-spacing:0.1px;">Итого</div><div class="t" style="left:920.00px;top:644.48px;font-size:14.2px;line-height:14.2px;color:#0b4537;font-weight:bold;letter-spacing:0.1px;">ИПН</div><div class="t" style="left:920.00px;top:661.48px;font-size:14.2px;line-height:14.2px;color:#0b4537;font-weight:bold;letter-spacing:0.1px;">Начисленные</div><div class="t" style="left:920.00px;top:678.98px;font-size:14.2px;line-height:14.2px;color:#0b4537;font-weight:bold;letter-spacing:0.1px;">доходы</div><div class="t" style="left:278.50px;top:698.46px;font-size:14.7px;line-height:14.7px;color:#0b4537;font-weight:bold;">ТОО Gamma ( Гамма )</div><div class="t" style="left:160.00px;width:400px;text-align:right;top:700.03px;font-size:13.9px;line-height:13.9px;color:#0b4537;font-weight:bold;">575 150,55</div><div class="t" style="left:277.00px;width:400px;text-align:right;top:700.03px;font-size:13.9px;line-height:13.9px;color:#0b4537;font-weight:bold;">238 037,18</div><div class="t" style="left:395.00px;width:400px;text-align:right;top:700.03px;font-size:13.9px;line-height:13.9px;color:#0b4537;font-weight:bold;">427 500,00</div><div class="t" style="left:512.00px;width:400px;text-align:right;top:700.03px;font-size:13.9px;line-height:13.9px;color:#0b4537;font-weight:bold;">427 500,00</div><div class="t" style="left:629.00px;width:400px;text-align:right;top:700.03px;font-size:13.9px;line-height:13.9px;color:#0b4537;font-weight:bold;">1 668 187,73</div><div class="t" style="left:291.70px;top:717.52px;font-size:11.2px;line-height:11.2px;color:#0b4537;font-weight:bold;">200.01.001.А</div><div class="t" style="left:161.00px;width:400px;text-align:right;top:717.69px;font-size:11px;line-height:11px;color:#0b4537;font-weight:bold;">575 150,55</div><div class="t" style="left:278.00px;width:400px;text-align:right;top:717.69px;font-size:11px;line-height:11px;color:#0b4537;font-weight:bold;">238 037,18</div><div class="t" style="left:396.00px;width:400px;text-align:right;top:717.69px;font-size:11px;line-height:11px;color:#0b4537;font-weight:bold;">427 500,00</div><div class="t" style="left:513.00px;width:400px;text-align:right;top:717.69px;font-size:11px;line-height:11px;color:#0b4537;font-weight:bold;">427 500,00</div><div class="t" style="left:630.00px;width:400px;text-align:right;top:717.69px;font-size:11px;line-height:11px;color:#0b4537;font-weight:bold;">1 668 187,73</div><div class="t" style="left:307.70px;top:733.32px;font-size:11.2px;line-height:11.2px;color:#4a4a4a;">Компенсация отпуска</div><div class="t" style="left:278.00px;width:400px;text-align:right;top:733.49px;font-size:11px;line-height:11px;color:#4a4a4a;">12 204,18</div><div class="t" style="left:630.00px;width:400px;text-align:right;top:733.49px;font-size:11px;line-height:11px;color:#4a4a4a;">12 204,18</div><div class="t" style="left:307.70px;top:748.32px;font-size:11.2px;line-height:11.2px;color:#4a4a4a;">Оклад по дням</div><div class="t" style="left:161.00px;width:400px;text-align:right;top:748.49px;font-size:11px;line-height:11px;color:#4a4a4a;">466 944,00</div><div class="t" style="left:278.00px;width:400px;text-align:right;top:748.49px;font-size:11px;line-height:11px;color:#4a4a4a;">225 833,00</div><div class="t" style="left:396.00px;width:400px;text-align:right;top:748.49px;font-size:11px;line-height:11px;color:#4a4a4a;">427 500,00</div><div class="t" style="left:513.00px;width:400px;text-align:right;top:748.49px;font-size:11px;line-height:11px;color:#4a4a4a;">427 500,00</div><div class="t" style="left:630.00px;width:400px;text-align:right;top:748.49px;font-size:11px;line-height:11px;color:#4a4a4a;">1 547 777,00</div><div class="t" style="left:307.70px;top:763.32px;font-size:11.2px;line-height:11.2px;color:#4a4a4a;">Оплата отпуска</div><div class="t" style="left:161.00px;width:400px;text-align:right;top:763.49px;font-size:11px;line-height:11px;color:#4a4a4a;">108 206,55</div><div class="t" style="left:630.00px;width:400px;text-align:right;top:763.49px;font-size:11px;line-height:11px;color:#4a4a4a;">108 206,55</div><div class="t" style="left:278.50px;top:777.86px;font-size:14.7px;line-height:14.7px;color:#0b4537;font-weight:bold;">Итого</div><div class="t" style="left:160.00px;width:400px;text-align:right;top:778.53px;font-size:13.9px;line-height:13.9px;color:#0b4537;font-weight:bold;">575 150,55</div><div class="t" style="left:277.00px;width:400px;text-align:right;top:778.53px;font-size:13.9px;line-height:13.9px;color:#0b4537;font-weight:bold;">238 037,18</div><div class="t" style="left:395.00px;width:400px;text-align:right;top:778.53px;font-size:13.9px;line-height:13.9px;color:#0b4537;font-weight:bold;">427 500,00</div><div class="t" style="left:512.00px;width:400px;text-align:right;top:778.53px;font-size:13.9px;line-height:13.9px;color:#0b4537;font-weight:bold;">427 500,00</div><div class="t" style="left:629.00px;width:400px;text-align:right;top:778.53px;font-size:13.9px;line-height:13.9px;color:#0b4537;font-weight:bold;">1 668 187,73</div><div class="b" style="left:234px;top:700px;width:12px;height:12px;background:#fff;border:1px solid #a9a9a9;"></div><div class="b" style="left:236px;top:705px;width:8px;height:1.4px;background:#333;"></div><div class="b" style="left:240px;top:712px;width:1px;height:63px;background:#a9a9a9;"></div><div class="b" style="left:240px;top:775px;width:33px;height:1px;background:#a9a9a9;"></div><div class="b" style="left:247px;top:717px;width:12px;height:12px;background:#fff;border:1px solid #a9a9a9;"></div><div class="b" style="left:249px;top:722px;width:8px;height:1.4px;background:#333;"></div><div class="b" style="left:253px;top:729px;width:1px;height:46px;background:#a9a9a9;"></div><div class="b" style="left:253px;top:775px;width:20px;height:1px;background:#a9a9a9;"></div><div class="b" style="left:547.5px;top:169px;width:1.6px;height:630px;background:rgba(120,120,120,0.28);"></div><svg class="b" style="left:241px;top:802px" width="6" height="8" viewBox="0 0 6 8"><path d="M5 0.5 L0.5 4 L5 7.5 Z" fill="#c4c4c4"/></svg><div class="b" style="left:256px;top:801px;width:1005px;height:9px;background:#d9d9d9;border-radius:4px 0 0 4px;"></div><div class="b" style="left:256px;top:801px;width:918px;height:9px;background:#9b9b9b;border-radius:4.5px;"></div><svg class="b" style="left:440px;top:494px" width="17" height="18" viewBox="0 0 17 18"><path d="M4 3.5 C4 1.5 7 0.8 8.5 2 C10 1.2 12.2 2.2 12 4 C13.5 4.2 14.5 5.5 14 7 L14.5 10 C14.8 12.5 13.8 14.5 12 15.5 L10 16.8 L7.5 16.8 L6.5 13.5 L3.5 11 C2.5 10 2.8 8.8 4 8.7 L4.5 8.8 C2.5 7.5 2.2 4.5 4 3.5 Z" fill="#fff" stroke="#000" stroke-width="1.5" stroke-linejoin="round"/><path d="M6 4 V7.5 M8.5 2.5 V7 M11 4 V7.5 M9 10 L12.5 13.5" stroke="#000" stroke-width="1.1"/></svg>
</body></html>
